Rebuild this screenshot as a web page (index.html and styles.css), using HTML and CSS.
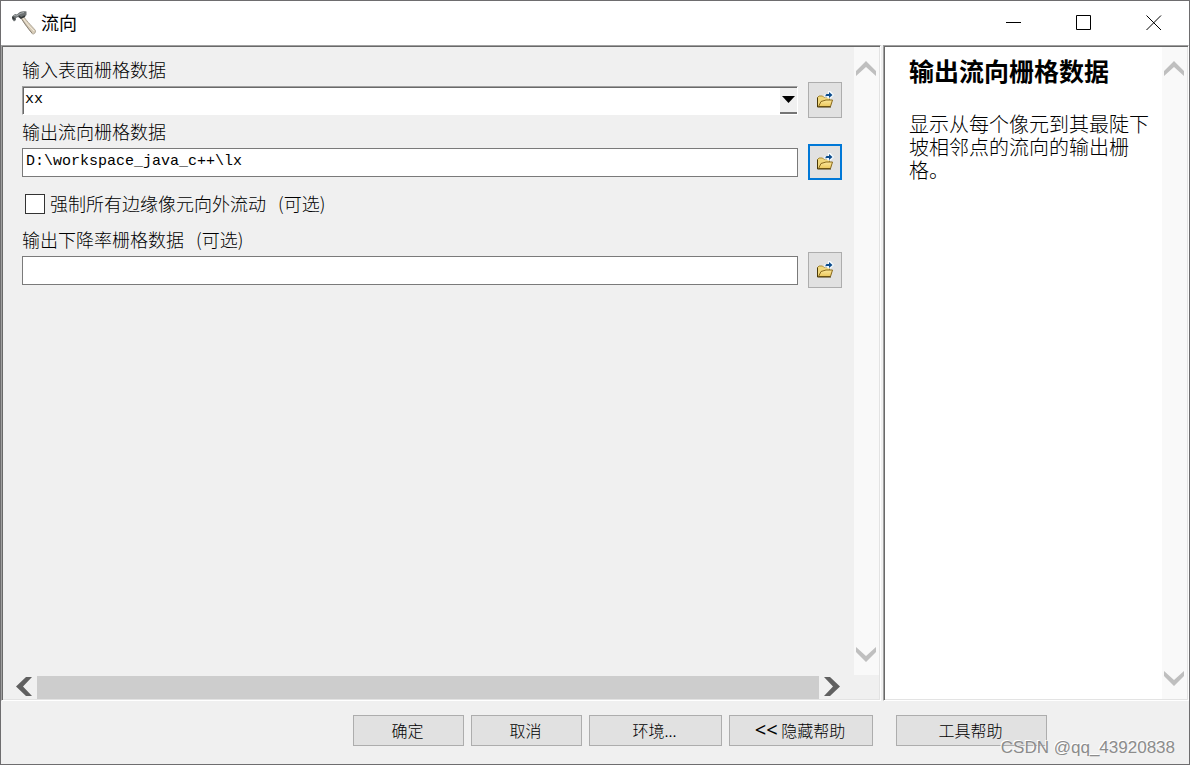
FILE: index.html
```html
<!DOCTYPE html>
<html lang="zh-CN">
<head>
<meta charset="utf-8">
<title>流向</title>
<link rel="stylesheet" href="styles.css">
</head>
<body>
<svg class="defs" width="0" height="0" aria-hidden="true">
  <defs>
    <linearGradient id="gold" x1="0" y1="0" x2="0" y2="1"><stop offset="0" stop-color="#fbe79a"/><stop offset="1" stop-color="#ecc85c"/></linearGradient>
    <symbol id="folder" viewBox="0 0 18 18">
      <path d="M1.500 15.500V6.500L3 5h3.500L8 6.500h5.500V9.500" fill="#f0d77c" stroke="#a88a34"/>
      <path d="M2.500 15.500L5 10.500l5-1.500h6.500L14.500 15.500z" fill="url(#gold)" stroke="#8a6a1c"/>
      <path d="M1.500 6.500v9.500H15" fill="none" stroke="#4a3806"/>
      <path d="M8.500 6.500V3h3.500V0h2.500l3.500 4-3.500 3.500H12l-1-1z" fill="#f4fbff"/>
      <path d="M9.500 5.500V4l1-1H13V1l3.500 3L13 7V5h-2z" fill="#0b4b8c"/>
    </symbol>
    <symbol id="up" viewBox="0 0 20 15"><path d="M0 10L10 0l10 10v5L10 6 0 15z" fill="currentColor"/></symbol>
    <symbol id="down" viewBox="0 0 20 15"><path d="M0 5l10 10L20 5V0L10 9 0 0z" fill="currentColor"/></symbol>
    <symbol id="left" viewBox="0 0 16 20"><path d="M10 0h6L7 9.500 16 19h-6L0 9.500z" fill="currentColor"/></symbol>
    <symbol id="right" viewBox="0 0 16 20"><path d="M6 0H0l9 9.500L0 19h6l10-9.500z" fill="currentColor"/></symbol>
  </defs>
</svg>
<div class="window">
  <header class="titlebar">
    <svg class="hammer" width="26" height="26" viewBox="0 0 26 26" aria-hidden="true">
      <path d="M9.500 7.500L12.500 6c2 4 7 8.500 12 14.500.5 2-1.500 4-3 3.500C17 18 13.500 12.500 9.500 7.500z" fill="#d8cdb9" stroke="#a39a8c" stroke-width=".8"/>
      <path d="M12 8c3 5 7 9 11 13" fill="none" stroke="#f3eadb"/>
      <path d="M11 9.500c3 5 6 9 10 13.500" fill="none" stroke="#8c8376"/>
      <path d="M1 6.500L4 4l2 .5C8 1.500 12 .5 15.500 1.500V5l-2 2-4 1.500L7 7 5 8v2l-2 1.500L1 9z" fill="#6c7172"/>
      <path d="M3 5.500l3 .5c2-2 4-3 7-3.500" fill="none" stroke="#a8adae"/>
      <path d="M1.500 7L3.500 9.500M8 6l2 2 4-2" fill="none" stroke="#343839" stroke-width="1.500"/>
    </svg>
    <h1 class="title">流向</h1>
    <div class="controls">
      <button class="control" aria-label="最小化"><svg width="16" height="16" viewBox="0 0 16 16"><path d="M0 7.500h15" stroke="#000" fill="none"/></svg></button>
      <button class="control" aria-label="最大化"><svg width="16" height="16" viewBox="0 0 16 16"><path d="M.5.500h14v14H.5z" stroke="#000" fill="none"/></svg></button>
      <button class="control" aria-label="关闭"><svg width="16" height="16" viewBox="0 0 16 16"><path d="M.5.500l14.500 14.500M15 .5L.5 15" stroke="#000" fill="none"/></svg></button>
    </div>
  </header>
  <main class="panels">
    <section class="panel form-panel">
      <form class="form" id="tool">
        <label class="label first" for="surface">输入表面栅格数据</label>
        <div class="combo">
          <select class="select" id="surface"><option>xx</option></select>
          <span class="drop"><svg width="13" height="7" viewBox="0 0 13 7" aria-hidden="true"><path d="M0 0h13L6.500 7z"/></svg></span>
        </div>
        <button type="button" class="browse" aria-label="浏览输入表面栅格数据"><svg width="18" height="18"><use href="#folder"/></svg></button>
        <label class="label second" for="flow">输出流向栅格数据</label>
        <input class="text" id="flow" type="text" value="D:\workspace_java_c++\lx">
        <button type="button" class="browse active" aria-label="浏览输出流向栅格数据"><svg width="18" height="18"><use href="#folder"/></svg></button>
        <label class="check"><input class="box" type="checkbox"><span class="check-text">强制所有边缘像元向外流动<span class="optional">(可选)</span></span></label>
        <label class="label third" for="drop">输出下降率栅格数据<span class="optional">(可选)</span></label>
        <input class="text" id="drop" type="text">
        <button type="button" class="browse" aria-label="浏览输出下降率栅格数据"><svg width="18" height="18"><use href="#folder"/></svg></button>
      </form>
      <div class="vbar">
        <svg width="20" height="15"><use href="#up"/></svg>
        <svg width="20" height="15"><use href="#down"/></svg>
      </div>
      <div class="hbar">
        <svg width="16" height="20"><use href="#left"/></svg>
        <div class="thumb"></div>
        <svg width="16" height="20"><use href="#right"/></svg>
      </div>
    </section>
    <aside class="panel help-panel">
      <article class="help">
        <h2 class="help-title">输出流向栅格数据</h2>
        <p class="help-text">显示从每个像元到其最陡下坡相邻点的流向的输出栅格。</p>
      </article>
      <div class="vbar">
        <svg width="20" height="15"><use href="#up"/></svg>
        <svg width="20" height="15"><use href="#down"/></svg>
      </div>
    </aside>
  </main>
  <footer class="footer">
    <button class="button" form="tool">确定</button>
    <button class="button">取消</button>
    <button class="button medium">环境...</button>
    <button class="button wide"><span class="chevrons">&lt;&lt;</span> 隐藏帮助</button>
    <button class="button tool-help">工具帮助</button>
  </footer>
  <span class="watermark">CSDN @qq_43920838</span>
</div>
</body>
</html>
```
FILE: styles.css
```css
* { box-sizing: border-box; }
body {
  margin: 0;
  color: #000;
  font-family: "Noto Sans CJK SC", sans-serif;
}
svg { display: block; flex: none; }
.defs { position: absolute; }
.window {
  position: relative;
  display: flex;
  flex-direction: column;
  height: 100vh;
  border: 1px solid #6e6d6f;
  background: #f0f0f0;
}
.titlebar {
  display: flex;
  align-items: center;
  height: 44px;
  padding-left: 10px;
  background: #fff;
}
.title {
  margin: 0 0 0 4px;
  padding-bottom: 2px;
  font-size: 18px;
  font-weight: 400;
  line-height: 24px;
}
.controls {
  display: flex;
  align-self: stretch;
  margin-left: auto;
}
.control {
  display: grid;
  place-items: center;
  width: 70px;
  padding: 0;
  border: 0;
  background: none;
}
.panels {
  display: grid;
  grid-template-columns: minmax(0, 1fr) 306px;
  gap: 2px;
  flex: 1;
  min-height: 0;
}
/* Sunken two-tone frame: outer line is the border, inner line the inset shadow */
.panel {
  display: grid;
  min-height: 0;
  border: 1px solid;
  border-color: #a0a0a0 #fff #fff #a0a0a0;
  padding: 1px;
  box-shadow: inset 1px 1px #696969, inset -1px -1px #e3e3e3;
}
.form-panel {
  grid-template-columns: minmax(0, 1fr) 25px;
  grid-template-rows: minmax(0, 1fr) 24px;
}
.form {
  display: grid;
  grid-template-columns: minmax(0, 1fr) 34px;
  column-gap: 10px;
  align-content: start;
  align-items: center;
  padding: 12px 12px 0 19px;
}
.label, .check {
  grid-column: 1 / -1;
  display: flex;
  align-items: center;
  font-size: 18px;
  font-weight: 300;
  line-height: 22px;
}
.label, .check-text { padding-bottom: 3px; }
.first { height: 23px; }
.second {
  height: 26px;
  padding-bottom: 0;
}
.third { height: 24px; }
.check { height: 48px; }
.optional { margin-left: 12px; }
.box {
  appearance: none;
  width: 20px;
  height: 20px;
  margin: 0 5px 0 3px;
  border: 1px solid #333;
  background: #fff;
}
.text, .select {
  width: 100%;
  height: 29px;
  margin: 0;
  border: 1px solid #7a7a7a;
  border-radius: 0;
  padding: 0 3px 2px;
  color: #000;
  background: #fff;
  font: 15px "Liberation Mono", monospace;
}
.combo { position: relative; }
.select {
  appearance: none;
  display: block;
  padding: 0 2px 1px;
  border-color: #a0a0a0 #fff #fff #a0a0a0;
  box-shadow: inset 1px 1px #696969;
}
.drop {
  position: absolute;
  top: 2px;
  right: 1px;
  bottom: 1px;
  display: grid;
  place-items: center;
  width: 17px;
  border-bottom: 2px solid #757575;
  background: #f0f0f0;
  pointer-events: none;
}
.browse {
  display: grid;
  place-items: center;
  height: 36px;
  padding: 0;
  border: 1px solid #adadad;
  background: #e1e1e1;
}
.active { border: 2px solid #0078d7; }
.vbar {
  display: flex;
  flex-direction: column;
  justify-content: space-between;
  align-items: flex-start;
  padding: 14px 2px 13px;
  background: #f9f9f9;
  color: #bfbfbf;
}
.hbar {
  display: flex;
  align-items: center;
  gap: 5px;
  padding: 0 14px 0 13px;
  color: #606060;
}
.thumb {
  flex: 1;
  height: 23px;
  background: #cdcdcd;
}
.help-panel {
  grid-template-columns: minmax(0, 1fr) 25px;
  background: #fff;
}
.help { padding: 6px 12px 0 24px; }
.help-title {
  margin: 0;
  font-size: 25px;
  font-weight: 700;
  line-height: 34px;
}
.help-text {
  margin: 25px 0 0;
  font-size: 20px;
  font-weight: 300;
  line-height: 23px;
}
.footer {
  display: flex;
  justify-content: flex-end;
  gap: 7px;
  padding: 14px 142px 18px 0;
}
.button {
  width: 111px;
  height: 31px;
  padding: 0 2px 2px 0;
  border: 1px solid #adadad;
  color: #000;
  background: #e1e1e1;
  font: 300 16px "Noto Sans CJK SC", sans-serif;
}
.medium { width: 133px; }
.wide { width: 144px; }
.chevrons { font: 20px "Noto Sans", sans-serif; line-height: 16px; }
.tool-help {
  width: 151px;
  margin-left: 16px;
}
.watermark {
  position: absolute;
  right: 14px;
  bottom: 6px;
  color: #8c8c8c;
  font: 17px "Liberation Sans", sans-serif;
  line-height: 20px;
  text-shadow: -1px -1px 0 #fff;
}
```
